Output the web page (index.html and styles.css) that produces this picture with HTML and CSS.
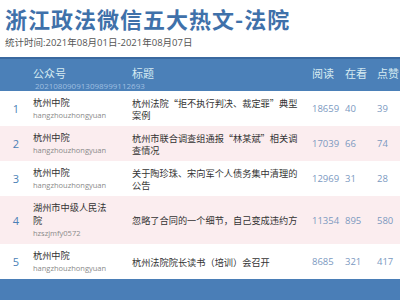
FILE: index.html
```
<!DOCTYPE html>
<html lang="zh-CN">
<head>
    <meta charset="UTF-8">
    <meta name="viewport" content="width=device-width, initial-scale=1.0">
    <title>浙江政法微信五大热文-法院</title>
    <link rel="stylesheet" href="styles.css">
</head>
<body>
    <header class="top">
        <h1>浙江政法微信五大热文-法院</h1>
        <p class="period">统计时间:2021年08月01日-2021年08月07日</p>
    </header>

    <div class="table">
        <div class="table-head">
            <div></div>
            <div class="head-account">
                <div class="head-label">公众号</div>
                <div class="head-id">202108090913098999112693</div>
            </div>
            <div class="head-label">标题</div>
            <div class="head-label">阅读</div>
            <div class="head-label">在看</div>
            <div class="head-label">点赞</div>
        </div>

        <div class="row">
            <div class="rank">1</div>
            <div class="account">
                <div class="account-name">杭州中院</div>
                <div class="account-id">hangzhouzhongyuan</div>
            </div>
            <div class="headline">杭州法院“拒不执行判决、裁定罪”典型案例</div>
            <div class="num">18659</div>
            <div class="num">40</div>
            <div class="num">39</div>
        </div>

        <div class="row alt">
            <div class="rank">2</div>
            <div class="account">
                <div class="account-name">杭州中院</div>
                <div class="account-id">hangzhouzhongyuan</div>
            </div>
            <div class="headline">杭州市联合调查组通报“林某斌”相关调查情况</div>
            <div class="num">17039</div>
            <div class="num">66</div>
            <div class="num">74</div>
        </div>

        <div class="row">
            <div class="rank">3</div>
            <div class="account">
                <div class="account-name">杭州中院</div>
                <div class="account-id">hangzhouzhongyuan</div>
            </div>
            <div class="headline">关于陶珍珠、宋向军个人债务集中清理的公告</div>
            <div class="num">12969</div>
            <div class="num">31</div>
            <div class="num">28</div>
        </div>

        <div class="row alt">
            <div class="rank">4</div>
            <div class="account">
                <div class="account-name">湖州市中级人民法院</div>
                <div class="account-id">hzszjmfy0572</div>
            </div>
            <div class="headline">忽略了合同的一个细节，自己变成违约方</div>
            <div class="num">11354</div>
            <div class="num">895</div>
            <div class="num">580</div>
        </div>

        <div class="row">
            <div class="rank">5</div>
            <div class="account">
                <div class="account-name">杭州中院</div>
                <div class="account-id">hangzhouzhongyuan</div>
            </div>
            <div class="headline">杭州法院院长读书（培训）会召开</div>
            <div class="num">8685</div>
            <div class="num">321</div>
            <div class="num">417</div>
        </div>
    </div>

    <footer class="bottom"></footer>
</body>
</html>
```

FILE: styles.css
```
body {
    margin: 0;
    background-color: #fff;
    font-family: "Noto Sans CJK SC", sans-serif;
    color: #333;
    overflow: hidden;
}

.top {
    padding: 4px 5px 0;
}

h1 {
    margin: 0;
    font-size: 22px;
    line-height: 28px;
    font-weight: bold;
    letter-spacing: 1px;
    color: #3f71aa;
}

.period {
    margin: 4px 0 7px;
    font-family: "Open Sans", "Noto Sans CJK SC", sans-serif;
    font-size: 9.5px;
    line-height: 14px;
    color: #555;
}

.table-head,
.row {
    display: grid;
    grid-template-columns: 32px 100px 180px 33px 32px 1fr;
}

.table-head {
    background-color: #4b80b8;
    border-top: 2px solid #3a69a0;
    padding: 7px 0 1px;
    color: #d6ebf2;
    align-items: start;
}

.head-label {
    font-size: 11px;
    line-height: 14px;
    white-space: nowrap;
}

.head-account {
    padding-left: 1px;
    white-space: nowrap;
}

.head-id {
    margin-top: 1px;
    padding-left: 2px;
    font-family: "Open Sans", sans-serif;
    font-size: 8px;
    line-height: 9px;
    color: #9fbfe0;
}

.row {
    align-items: center;
    padding: 5px 0;
    background-color: #fff;
}

.row.alt {
    background-color: #fbedef;
}

.rank {
    text-align: center;
    font-family: "Open Sans", sans-serif;
    font-size: 11px;
    color: #4a7fb6;
}

.account {
    padding-left: 1px;
    padding-right: 18px;
}

.account-name {
    font-size: 9.2px;
    line-height: 13px;
    color: #333;
}

.account-id {
    font-family: "Open Sans", sans-serif;
    font-size: 7.5px;
    line-height: 12px;
    color: #8a8a8a;
}

.headline {
    padding-right: 10px;
    font-size: 9.2px;
    line-height: 12px;
    color: #333;
}

.num {
    font-family: "Open Sans", sans-serif;
    font-size: 9.5px;
    color: #7b99bf;
}

.bottom {
    height: 23px;
    background-color: #4a7eb7;
}
```
